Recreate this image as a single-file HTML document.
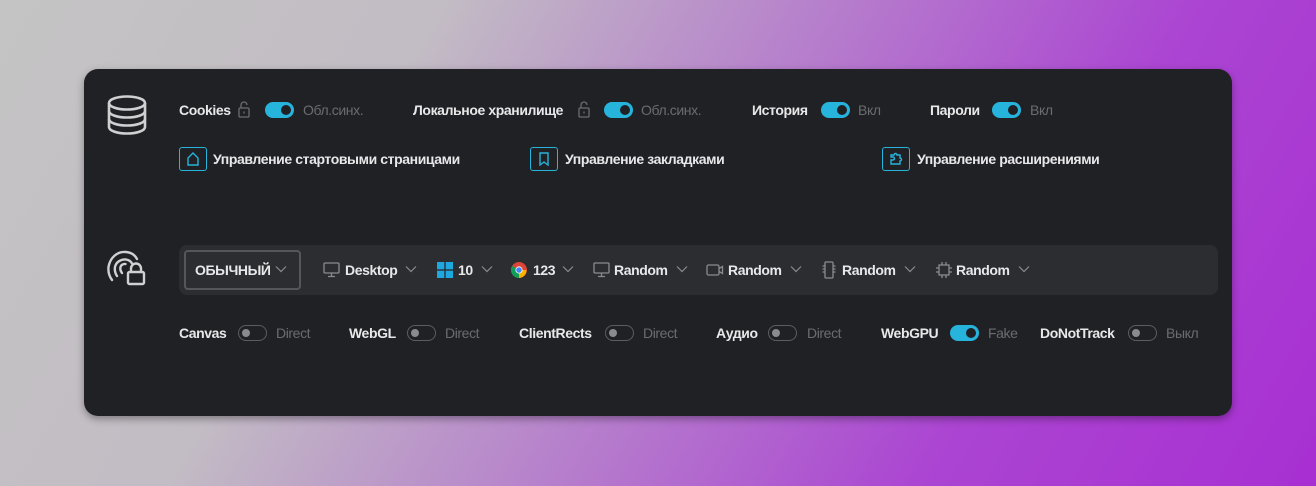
<!DOCTYPE html>
<html><head><meta charset="utf-8"><style>
*{margin:0;padding:0;box-sizing:border-box}
body{width:1316px;height:486px;overflow:hidden;position:relative;background:linear-gradient(120deg,#c4c4c4 0%,#c2bcc4 28%,#b67fcc 52%,#ab45d2 75%,#a82fd2 100%);font-family:"Liberation Sans",sans-serif}
.card{position:absolute;left:84px;top:69px;width:1148px;height:347px;background:#202124;border-radius:14px;box-shadow:0 3px 8px rgba(0,0,0,.35)}
.t{position:absolute;font-size:14px;line-height:16px;white-space:nowrap;letter-spacing:-0.4px}
.b{color:#e8e8ea;font-weight:bold}
.g{color:#6b6c70}
.tg{position:absolute;width:29px;height:16px;border-radius:8px}
.on{background:#27b4dc}
.on::after{content:"";position:absolute;right:3px;top:3px;width:10px;height:10px;border-radius:50%;background:#202124}
.off{border:1.5px solid #5c5d61}
.off::after{content:"";position:absolute;left:2.5px;top:2.5px;width:8px;height:8px;border-radius:50%;background:#8a8b8f}
.ib{position:absolute;width:28px;height:24px;border:1.5px solid #27b4dc;border-radius:3px}
svg{position:absolute}
.bar{position:absolute;left:179px;top:245px;width:1039px;height:50px;background:#2c2d31;border-radius:8px}
.sel{position:absolute;left:184px;top:250px;width:117px;height:40px;border:2px solid #55565a;border-radius:4px}
</style></head><body>
<div class="card"></div>

<!-- database icon -->
<svg style="left:105px;top:94px" width="44" height="42" viewBox="0 0 44 42" fill="none" stroke="#d0d0d2" stroke-width="2.6">
<ellipse cx="22" cy="9" rx="18" ry="6.5"/>
<path d="M4 9v24c0 3.6 8 6.5 18 6.5s18-2.9 18-6.5V9"/>
<path d="M4 17c0 3.6 8 6.5 18 6.5s18-2.9 18-6.5"/>
<path d="M4 25c0 3.6 8 6.5 18 6.5s18-2.9 18-6.5"/>
</svg>

<!-- row 1 -->
<div class="t b" style="left:179px;top:102px">Cookies</div>
<svg style="left:238px;top:101px" width="12" height="17" viewBox="0 0 12 17" fill="none" stroke="#6b6c70" stroke-width="1.3"><path d="M3 7V4a3 3 0 0 1 6 0"/><rect x="1" y="7" width="10" height="9" rx="1"/><path d="M6 10.5v2"/></svg>
<div class="tg on" style="left:265px;top:102px"></div>
<div class="t g" style="left:303px;top:102px">Обл.синх.</div>

<div class="t b" style="left:413px;top:102px">Локальное хранилище</div>
<svg style="left:578px;top:101px" width="12" height="17" viewBox="0 0 12 17" fill="none" stroke="#6b6c70" stroke-width="1.3"><path d="M3 7V4a3 3 0 0 1 6 0"/><rect x="1" y="7" width="10" height="9" rx="1"/><path d="M6 10.5v2"/></svg>
<div class="tg on" style="left:604px;top:102px"></div>
<div class="t g" style="left:641px;top:102px">Обл.синх.</div>

<div class="t b" style="left:752px;top:102px">История</div>
<div class="tg on" style="left:821px;top:102px"></div>
<div class="t g" style="left:858px;top:102px">Вкл</div>

<div class="t b" style="left:930px;top:102px">Пароли</div>
<div class="tg on" style="left:992px;top:102px"></div>
<div class="t g" style="left:1030px;top:102px">Вкл</div>

<!-- row 2 -->
<div class="ib" style="left:179px;top:147px"></div>
<svg style="left:179px;top:147px" width="28" height="24" viewBox="0 0 28 24" fill="none" stroke="#27b4dc" stroke-width="1.4"><path d="M9 11l5-5 5 5v7H9z"/></svg>
<div class="t b" style="left:213px;top:151px">Управление стартовыми страницами</div>

<div class="ib" style="left:530px;top:147px"></div>
<svg style="left:530px;top:147px" width="28" height="24" viewBox="0 0 28 24" fill="none" stroke="#27b4dc" stroke-width="1.4"><path d="M10 6h8v12l-4-3-4 3z"/></svg>
<div class="t b" style="left:565px;top:151px">Управление закладками</div>

<div class="ib" style="left:882px;top:147px"></div>
<svg style="left:882px;top:147px" width="28" height="24" viewBox="0 0 28 24" fill="none" stroke="#27b4dc" stroke-width="1.4"><path d="M9 17v-4h2a1.5 1.5 0 0 0 0-3H9V8h3a1.5 1.5 0 0 1 3 0h3v3a1.5 1.5 0 0 1 0 3v3z"/></svg>
<div class="t b" style="left:917px;top:151px">Управление расширениями</div>

<!-- fingerprint icon -->
<svg style="left:104px;top:246px" width="44" height="42" viewBox="0 0 44 42" fill="none" stroke="#d0d0d2" stroke-width="2.4" stroke-linecap="round">
<path d="M8 34c-3-4-4-8-3.5-13C6 12 13 5 22 6c5 .5 9 3 11 7"/>
<path d="M13 30c-2-3-2.5-6-2-9 1-5 6-8 11-7.5 3 .5 5 2 6 4"/>
<path d="M18 27c-1.5-2-2-4-1.5-6 .5-2 3-3.5 5-3"/>
<rect x="24" y="26" width="16" height="12" rx="1.5"/>
<path d="M27 26v-3.5a5 5 0 0 1 10 0V26"/>
</svg>

<!-- toolbar -->
<div class="bar"></div>
<div class="sel"></div>
<div class="t b" style="left:195px;top:262px">ОБЫЧНЫЙ</div>
<svg style="left:275px;top:265px" width="12" height="8" viewBox="0 0 12 8" fill="none" stroke="#8a8b8f" stroke-width="1.2"><path d="M1 1.5l5 5 5-5"/></svg>

<svg style="left:323px;top:262px" width="17" height="16" viewBox="0 0 17 16" fill="none" stroke="#8a8b8f" stroke-width="1.3"><rect x="1" y="1" width="15" height="10" rx="1"/><path d="M8.5 11v3M5 14.5h7"/></svg>
<div class="t b" style="left:345px;top:262px">Desktop</div>
<svg style="left:405px;top:265px" width="12" height="8" viewBox="0 0 12 8" fill="none" stroke="#8a8b8f" stroke-width="1.2"><path d="M1 1.5l5 5 5-5"/></svg>

<svg style="left:437px;top:262px" width="16" height="16" viewBox="0 0 16 16" fill="#1ea8e0"><rect x="0" y="0" width="7.3" height="7.3"/><rect x="8.7" y="0" width="7.3" height="7.3"/><rect x="0" y="8.7" width="7.3" height="7.3"/><rect x="8.7" y="8.7" width="7.3" height="7.3"/></svg>
<div class="t b" style="left:458px;top:262px">10</div>
<svg style="left:481px;top:265px" width="12" height="8" viewBox="0 0 12 8" fill="none" stroke="#8a8b8f" stroke-width="1.2"><path d="M1 1.5l5 5 5-5"/></svg>

<svg style="left:511px;top:262px" width="16" height="16" viewBox="0 0 16 16"><circle cx="8" cy="8" r="8" fill="#db4437"/><path d="M8 8L1.07 4A8 8 0 0 0 8 16z" fill="#0f9d58"/><path d="M8 8H15.5A8 8 0 0 1 8 16z" fill="#f4b400"/><circle cx="8" cy="8" r="3.6" fill="#fff"/><circle cx="8" cy="8" r="2.8" fill="#4285f4"/></svg>
<div class="t b" style="left:533px;top:262px">123</div>
<svg style="left:562px;top:265px" width="12" height="8" viewBox="0 0 12 8" fill="none" stroke="#8a8b8f" stroke-width="1.2"><path d="M1 1.5l5 5 5-5"/></svg>

<svg style="left:593px;top:262px" width="17" height="16" viewBox="0 0 17 16" fill="none" stroke="#8a8b8f" stroke-width="1.3"><rect x="1" y="1" width="15" height="10" rx="1"/><path d="M8.5 11v3M5 14.5h7"/></svg>
<div class="t b" style="left:614px;top:262px">Random</div>
<svg style="left:676px;top:265px" width="12" height="8" viewBox="0 0 12 8" fill="none" stroke="#8a8b8f" stroke-width="1.2"><path d="M1 1.5l5 5 5-5"/></svg>

<svg style="left:706px;top:262px" width="18" height="16" viewBox="0 0 18 16" fill="none" stroke="#8a8b8f" stroke-width="1.3"><rect x="1" y="3" width="12" height="10" rx="1.5"/><path d="M13 6.5l3.5-2v7l-3.5-2"/></svg>
<div class="t b" style="left:728px;top:262px">Random</div>
<svg style="left:790px;top:265px" width="12" height="8" viewBox="0 0 12 8" fill="none" stroke="#8a8b8f" stroke-width="1.2"><path d="M1 1.5l5 5 5-5"/></svg>

<svg style="left:821px;top:261px" width="16" height="18" viewBox="0 0 16 18" fill="none" stroke="#8a8b8f" stroke-width="1.3"><rect x="4" y="1" width="8" height="16" rx="1"/><path d="M1.5 5h2M1.5 8h2M1.5 11h2M12.5 5h2M12.5 8h2M12.5 11h2"/></svg>
<div class="t b" style="left:842px;top:262px">Random</div>
<svg style="left:904px;top:265px" width="12" height="8" viewBox="0 0 12 8" fill="none" stroke="#8a8b8f" stroke-width="1.2"><path d="M1 1.5l5 5 5-5"/></svg>

<svg style="left:935px;top:261px" width="18" height="18" viewBox="0 0 18 18" fill="none" stroke="#8a8b8f" stroke-width="1.3"><rect x="4" y="4" width="10" height="10"/><path d="M7 1v3M11 1v3M7 14v3M11 14v3M1 7h3M1 11h3M14 7h3M14 11h3"/></svg>
<div class="t b" style="left:956px;top:262px">Random</div>
<svg style="left:1018px;top:265px" width="12" height="8" viewBox="0 0 12 8" fill="none" stroke="#8a8b8f" stroke-width="1.2"><path d="M1 1.5l5 5 5-5"/></svg>

<!-- row 3 -->
<div class="t b" style="left:179px;top:325px">Canvas</div>
<div class="tg off" style="left:238px;top:325px"></div>
<div class="t g" style="left:276px;top:325px">Direct</div>

<div class="t b" style="left:349px;top:325px">WebGL</div>
<div class="tg off" style="left:407px;top:325px"></div>
<div class="t g" style="left:445px;top:325px">Direct</div>

<div class="t b" style="left:519px;top:325px">ClientRects</div>
<div class="tg off" style="left:605px;top:325px"></div>
<div class="t g" style="left:643px;top:325px">Direct</div>

<div class="t b" style="left:716px;top:325px">Аудио</div>
<div class="tg off" style="left:768px;top:325px"></div>
<div class="t g" style="left:807px;top:325px">Direct</div>

<div class="t b" style="left:881px;top:325px">WebGPU</div>
<div class="tg on" style="left:950px;top:325px"></div>
<div class="t g" style="left:988px;top:325px">Fake</div>

<div class="t b" style="left:1040px;top:325px">DoNotTrack</div>
<div class="tg off" style="left:1128px;top:325px"></div>
<div class="t g" style="left:1166px;top:325px">Выкл</div>
</body></html>
